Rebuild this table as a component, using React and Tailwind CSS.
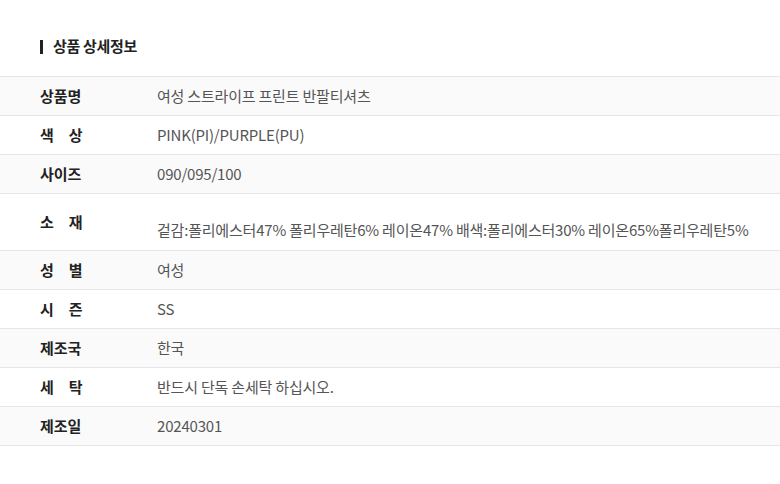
import React from "react";

const rows = [
  { label: "상품명", value: "여성 스트라이프 프린트 반팔티셔츠" },
  { label: "색　상", value: "PINK(PI)/PURPLE(PU)" },
  { label: "사이즈", value: "090/095/100" },
  {
    label: "소　재",
    value: "겉감:폴리에스터47% 폴리우레탄6% 레이온47% 배색:폴리에스터30% 레이온65%폴리우레탄5%",
    tall: true,
  },
  { label: "성　별", value: "여성" },
  { label: "시　즌", value: "SS" },
  { label: "제조국", value: "한국" },
  { label: "세　탁", value: "반드시 단독 손세탁 하십시오." },
  { label: "제조일", value: "20240301" },
];

const App = () => {
  return (
    <div
      className="w-[780px] h-[484px] bg-white overflow-hidden"
      style={{ fontFamily: '"Noto Sans CJK KR", "Noto Sans", sans-serif' }}
    >
      <div className="h-[76px] flex items-center pl-[40px] pt-[17px]">
        <span className="w-[3px] h-[14px] bg-[#222] mr-[10px]" />
        <h2 className="text-[15px] font-bold text-[#222] tracking-[-0.3px]">상품 상세정보</h2>
      </div>
      <div className="border-t border-[#e6e6e6]">
        {rows.map((row, i) => (
          <div
            key={row.label}
            className={`flex border-b border-[#e6e6e6] ${
              i % 2 === 0 ? "bg-[#fafafa]" : "bg-white"
            } ${row.tall ? "h-[57px] items-start" : "h-[39px] items-center"}`}
          >
            <div
              className={`w-[157px] shrink-0 pl-[40px] text-[15px] font-bold text-[#222] ${
                row.tall ? "pt-[17px]" : ""
              }`}
            >
              {row.label}
            </div>
            <div
              className={`text-[15px] text-[#555] tracking-[-0.2px] whitespace-nowrap ${
                row.tall ? "pt-[25px]" : ""
              }`}
            >
              {row.value}
            </div>
          </div>
        ))}
      </div>
    </div>
  );
};

export default App;
